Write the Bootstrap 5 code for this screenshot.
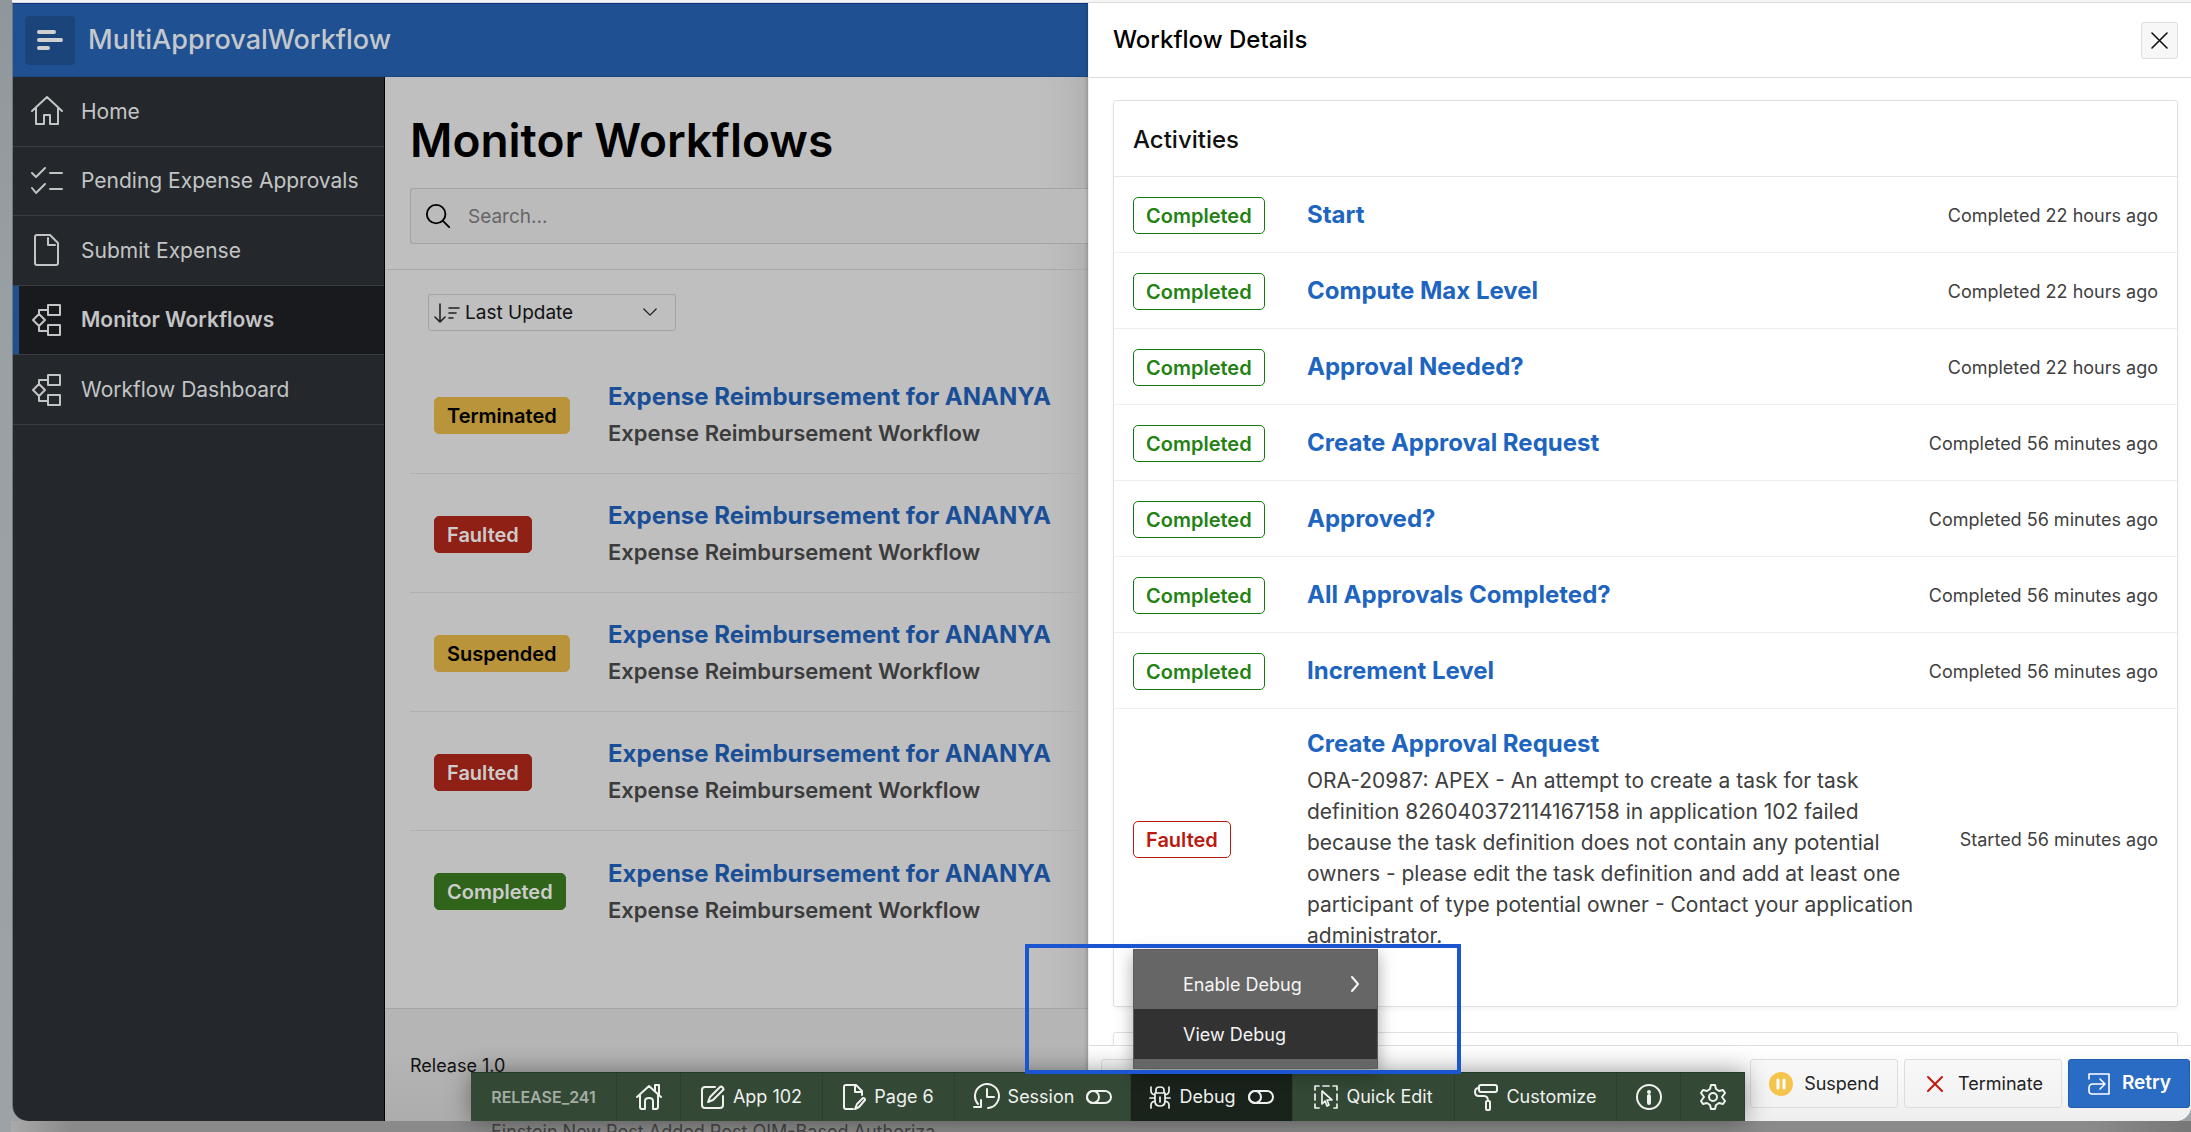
<!DOCTYPE html>
<html lang="en">
<head>
<meta charset="utf-8">
<meta name="viewport" content="width=device-width, initial-scale=1">
<title>Monitor Workflows</title>
<link rel="stylesheet" href="https://cdn.jsdelivr.net/npm/bootstrap@5.3.0/dist/css/bootstrap.min.css">
<style>
  body { font-family: Inter, "Liberation Sans", sans-serif; background: #8a8a8a; color: #000; }
  a { text-decoration: none; }
  svg { fill: none; stroke: currentColor; stroke-width: 2; stroke-linecap: round; stroke-linejoin: round; flex: none; }
  .desk { padding: 2px 0 0 12px; background: linear-gradient(#8f979d, #9aa1a5 30%, #9ca2a5); }
  .app-window { position: relative; border-top: 1px solid #d8dadd; border-left: 1px solid #6f777e; border-radius: 0 0 16px 16px; background: #bfbfbf; min-height: 0; box-shadow: 0 -2px #f4f5f6; }
  .clip-box { border-radius: 0 0 15px 15px; min-height: 0; overflow: hidden; }
  .left-side { min-width: 0; }
  .under-window { margin-left: -1px; color: #444; height: 11px; padding-left: 480px; font-size: 18px; line-height: 22px; background: linear-gradient(90deg, #aaa, #8a8a8a 60px, #8a8a8a 2080px, #777); overflow: hidden; }
  .app-header { height: 74px; background: #1f5091; border-top: 1px solid #12307f; border-bottom: 1px solid #184784; color: #c4c7cc; padding: 0 12px; gap: 13px; font-size: 27px; font-weight: 500; }
  .menu-btn { width: 50px; height: 49px; border: 0; border-radius: 4px; background: #1b447b; color: #d0d0d0; }
  .side-nav { width: 372px; background: #24282c; border-right: 1px solid #000; }
  .side-list { height: 348px; }
  .side-link { flex: 1 1 0; min-height: 0; color: #c3c4c5; font-size: 21px; gap: 18px; padding-left: 18px; border-bottom: 1px solid #3a3e42; }
  .side-link.active { background: #191a1d; font-weight: 600; box-shadow: inset 6px 0 #1f5091; }
  .page-title { font-size: 46px; line-height: 60px; font-weight: 600; margin: 0; }
  .page-head { padding: 33px 0 25px 25px; border-bottom: 1px solid #a9a9a9; gap: 18px; }
  .search-box { height: 56px; border: 1px solid #a3a3a3; border-right: 0; border-radius: 3px 0 0 3px; background: #bbb; padding-left: 14px; gap: 17px; }
  .search-box input { border: 0; background: none; outline: 0; font-size: 19px; color: #222; padding: 2px 0 0; }
  .search-box input::placeholder { color: #666; opacity: 1; }
  .sort-box { width: 248px; height: 37px; margin: 24px 0 24px 43px; border: 1px solid #a3a3a3; border-radius: 3px; padding: 0 18px 0 4px; gap: 4px; color: #222; }
  .sort-box select { appearance: none; border: 0; background: none; font-size: 19px; padding: 2px 0 0; min-width: 0; color: #111; }
  .flow-row { height: 119px; margin-left: 25px; padding: 2px 0 0 24px; border-bottom: 1px solid #b0b0b0; }
  .flow-row:last-child { border: 0; }
  .flow-status { width: 174px; }
  .flow-name { font-size: 24px; line-height: 36px; font-weight: 700; color: #1a4f97; }
  .flow-kind { font-size: 22px; line-height: 36px; font-weight: 600; color: #3c3c3c; }
  .tag { display: inline-block; height: 37px; line-height: 36px; padding: 0 12px; border: 1px solid; border-radius: 5px; font-size: 20px; font-weight: 600; }
  .tag-warn { background: #b9943b; border-color: #b9943b; color: #000; }
  .tag-fault { background: #8e2015; border-color: #8e2015; color: #ccc; }
  .tag-done { background: #30641a; border-color: #30641a; color: #ccc; }
  .tag-line-done { color: #248213; border-color: #147814; }
  .tag-line-fault { color: #ba1a10; border-color: #ba1a10; }
  .page-foot { height: 113px; border-top: 1px solid #a5a5a5; background: linear-gradient(#b5b5b5 40px, #acacac); padding: 43px 0 0 25px; font-size: 18px; line-height: 28px; color: #111; }
  .shade { box-shadow: inset -50px 0 50px -50px rgba(0,0,0,.16); }
  .drawer { width: 1103px; background: #fff; border-left: 1px solid #eee; box-shadow: 0 0 4px rgba(0,0,0,.3); position: relative; }
  .drawer-head { height: 75px; padding: 0 13px 0 24px; border-bottom: 1px solid #dcdcdc; font-size: 24px; font-weight: 500; }
  .close-btn { width: 37px; height: 37px; padding: 0; border: 1px solid #dedede; border-radius: 3px; background: #f7f7f7; color: #111; }
  .drawer-body { padding: 22px 13px 0 24px; gap: 25px; min-height: 0; overflow: hidden; }
  .panel { flex: none; border: 1px solid #e0e0e0; border-radius: 3px; background: #fff; box-shadow: 0 2px 4px rgba(0,0,0,.05); }
  .panel-title { height: 76px; line-height: 77px; padding-left: 19px; font-size: 24px; font-weight: 500; color: #111; margin: 0; border-bottom: 1px solid #e6e6e6; }
  .panel-next { height: 60px; }
  .act-row { min-height: 76px; padding: 1px 19px 0; border-bottom: 1px solid #eee; gap: 16px; }
  .act-row.failed { padding-top: 18px; padding-bottom: 18px; border: 0; margin-bottom: 37px; }
  .act-status { width: 158px; }
  .act-name { font-size: 24px; line-height: 34px; font-weight: 700; color: #1d65c0; }
  .act-text { margin-top: 4px; font-size: 21px; line-height: 31px; color: #404040; }
  .act-when { font-size: 18px; color: #404040; white-space: nowrap; }
  .drawer-foot { height: 76px; padding: 0 1px 0 12px; border-top: 1px solid #dedede; background: linear-gradient(#fff, #eee); gap: 6px; }
  .foot-btn { height: 49px; border: 1px solid #ddd; border-radius: 3px; background: linear-gradient(#f8f8f8, #f2f2f2); font-size: 18px; color: #222; padding: 0 18px; gap: 11px; }
  .foot-btn.primary { background: #2a6bc4; border-color: #1f5cb2; color: #fff; font-size: 19px; font-weight: 600; }
  .dev-bar { position: absolute; left: 458px; bottom: 0; height: 49px; background: #334835; box-shadow: 0 0 24px rgba(0,0,0,.4); border-top: 1px solid #1e3d24; font-size: 18px; }
  .dev-bar button, .dev-bar .ws { flex: none; border: 0; border-right: 1px solid #2c402e; background: none; color: #f0f2f0; gap: 8px; padding: 0 0 1px; }
  .dev-bar .ws { width: 146px; font-size: 16px; font-weight: 600; color: #a3ada4; }
  .dev-bar .w-icon { width: 64px; }
  .dev-bar .w-mid { width: 142px; }
  .dev-bar .w-page { width: 132px; }
  .dev-bar .w-ses { width: 176px; }
  .dev-bar .w-big { width: 162px; }
  .dev-bar .on { background: #19221b; }
  .debug-menu { position: absolute; left: 1120px; bottom: 52px; width: 245px; height: 120px; background: #666; box-shadow: 0 5px 16px rgba(0,0,0,.35); font-size: 18px; border: 1px solid #5c5c5c; padding: 9px 0; }
  .debug-menu button { height: 50px; border: 0; background: none; color: #f5f5f5; padding: 0 17px 0 49px; }
  .debug-menu .hot { background: #323232; }
  .callout { position: absolute; left: 1012px; bottom: 47px; width: 436px; height: 130px; border: 4px solid #1b55cf; pointer-events: none; }
</style>
</head>
<body class="vh-100 overflow-hidden">
<svg width="0" height="0" class="position-absolute" aria-hidden="true">
  <symbol id="i-flow" viewBox="0 0 30 34"><rect x="16" y="2" width="12" height="10"/><rect x="16" y="22" width="12" height="10"/><path d="M1 17l6-6 6 6-6 6zM7 11V7h9M7 23v5h9"/></symbol>
  <symbol id="i-toggle" viewBox="0 0 26 14"><rect x="1" y="1" width="24" height="12" rx="6"/><circle cx="7" cy="7" r="6"/></symbol>
</svg>
<div class="desk d-flex flex-column vh-100">
  <div class="app-window d-flex flex-column flex-fill">
    <div class="clip-box d-flex flex-fill">
      <div class="left-side d-flex flex-column flex-fill">
        <header class="app-header d-flex align-items-center">
          <button class="menu-btn d-flex align-items-center justify-content-center p-0" aria-label="Menu"><svg width="28" height="24" viewBox="0 0 28 24" style="stroke-width:4"><path d="M3 4h15M3 12h22M3 20h9"/></svg></button>
          <div>MultiApprovalWorkflow</div>
        </header>
        <div class="d-flex flex-fill">
          <nav class="side-nav flex-shrink-0">
            <div class="side-list d-flex flex-column">
              <a href="#" class="side-link d-flex align-items-center"><svg width="32" height="32" viewBox="0 0 32 32"><path d="M1 16L16 2l15 14M5 13v16h8v-9h6v9h8V13"/></svg>Home</a>
              <a href="#" class="side-link d-flex align-items-center"><svg width="32" height="32" viewBox="0 0 32 32"><path d="M1 8l4 4 9-9M1 23l4 5 9-9M19 8h12M19 24h12"/></svg>Pending Expense Approvals</a>
              <a href="#" class="side-link d-flex align-items-center"><svg width="32" height="34" viewBox="0 0 32 34"><path d="M6 2h13l8 8v20q0 2-2 2H6q-2 0-2-2V4q0-2 2-2zM17 5v7h7"/></svg>Submit Expense</a>
              <a href="#" class="side-link active d-flex align-items-center" aria-current="page"><svg width="32" height="34"><use href="#i-flow"/></svg>Monitor Workflows</a>
              <a href="#" class="side-link d-flex align-items-center"><svg width="32" height="34"><use href="#i-flow"/></svg>Workflow Dashboard</a>
            </div>
          </nav>
          <main class="d-flex flex-column flex-fill shade">
            <div class="page-head d-flex flex-column">
              <h1 class="page-title">Monitor Workflows</h1>
              <label class="search-box d-flex align-items-center"><svg width="26" height="26" viewBox="0 0 28 28"><circle cx="12" cy="12" r="10"/><path d="M19 19l7 7"/></svg><input type="search" class="flex-fill" placeholder="Search..." aria-label="Search"></label>
            </div>
            <label class="sort-box d-flex align-items-center flex-shrink-0"><svg width="28" height="20" viewBox="0 0 28 20"><path d="M7 1v18M2 14l5 5 5-5M16 5h10M16 10h7M16 15h4" style="stroke-width:1.6"/></svg><select class="flex-fill" aria-label="Sort by"><option>Last Update</option></select><svg width="14" height="9" viewBox="0 0 16 10" style="stroke-width:1.5"><path d="M1 1l7 7 7-7"/></svg></label>
            <div class="flex-fill">
              <div class="flow-row d-flex align-items-center"><div class="flow-status"><span class="tag tag-warn">Terminated</span></div><div><a href="#" class="flow-name d-block">Expense Reimbursement for ANANYA</a><div class="flow-kind">Expense Reimbursement Workflow</div></div></div>
              <div class="flow-row d-flex align-items-center"><div class="flow-status"><span class="tag tag-fault">Faulted</span></div><div><a href="#" class="flow-name d-block">Expense Reimbursement for ANANYA</a><div class="flow-kind">Expense Reimbursement Workflow</div></div></div>
              <div class="flow-row d-flex align-items-center"><div class="flow-status"><span class="tag tag-warn">Suspended</span></div><div><a href="#" class="flow-name d-block">Expense Reimbursement for ANANYA</a><div class="flow-kind">Expense Reimbursement Workflow</div></div></div>
              <div class="flow-row d-flex align-items-center"><div class="flow-status"><span class="tag tag-fault">Faulted</span></div><div><a href="#" class="flow-name d-block">Expense Reimbursement for ANANYA</a><div class="flow-kind">Expense Reimbursement Workflow</div></div></div>
              <div class="flow-row d-flex align-items-center"><div class="flow-status"><span class="tag tag-done">Completed</span></div><div><a href="#" class="flow-name d-block">Expense Reimbursement for ANANYA</a><div class="flow-kind">Expense Reimbursement Workflow</div></div></div>
            </div>
            <footer class="page-foot">Release 1.0</footer>
          </main>
        </div>
      </div>
      <aside class="drawer d-flex flex-column flex-shrink-0" aria-label="Workflow Details">
        <div class="drawer-head d-flex align-items-center justify-content-between flex-shrink-0">
          <div>Workflow Details</div>
          <button class="close-btn d-flex align-items-center justify-content-center" aria-label="Close"><svg width="17" height="17" viewBox="0 0 17 17" style="stroke-width:1.6"><path d="M1 1l15 15M16 1L1 16"/></svg></button>
        </div>
        <div class="drawer-body d-flex flex-column flex-fill">
          <section class="panel">
            <h2 class="panel-title">Activities</h2>
            <div class="act-row d-flex align-items-center"><div class="act-status"><span class="tag tag-line-done">Completed</span></div><a href="#" class="act-name flex-fill">Start</a><div class="act-when">Completed 22 hours ago</div></div>
            <div class="act-row d-flex align-items-center"><div class="act-status"><span class="tag tag-line-done">Completed</span></div><a href="#" class="act-name flex-fill">Compute Max Level</a><div class="act-when">Completed 22 hours ago</div></div>
            <div class="act-row d-flex align-items-center"><div class="act-status"><span class="tag tag-line-done">Completed</span></div><a href="#" class="act-name flex-fill">Approval Needed?</a><div class="act-when">Completed 22 hours ago</div></div>
            <div class="act-row d-flex align-items-center"><div class="act-status"><span class="tag tag-line-done">Completed</span></div><a href="#" class="act-name flex-fill">Create Approval Request</a><div class="act-when">Completed 56 minutes ago</div></div>
            <div class="act-row d-flex align-items-center"><div class="act-status"><span class="tag tag-line-done">Completed</span></div><a href="#" class="act-name flex-fill">Approved?</a><div class="act-when">Completed 56 minutes ago</div></div>
            <div class="act-row d-flex align-items-center"><div class="act-status"><span class="tag tag-line-done">Completed</span></div><a href="#" class="act-name flex-fill">All Approvals Completed?</a><div class="act-when">Completed 56 minutes ago</div></div>
            <div class="act-row d-flex align-items-center"><div class="act-status"><span class="tag tag-line-done">Completed</span></div><a href="#" class="act-name flex-fill">Increment Level</a><div class="act-when">Completed 56 minutes ago</div></div>
            <div class="act-row failed d-flex align-items-center"><div class="act-status flex-shrink-0"><span class="tag tag-line-fault">Faulted</span></div><div class="flex-fill"><a href="#" class="act-name d-block">Create Approval Request</a><div class="act-text">ORA-20987: APEX - An attempt to create a task for task definition 826040372114167158 in application 102 failed because the task definition does not contain any potential owners - please edit the task definition and add at least one participant of type potential owner - Contact your application administrator.</div></div><div class="act-when">Started 56 minutes ago</div></div>
          </section>
          <section class="panel panel-next"></section>
        </div>
        <div class="drawer-foot d-flex align-items-center flex-shrink-0">
          <button class="foot-btn me-auto" aria-label="Cancel"><svg width="20" height="16" viewBox="0 0 20 16"></svg></button>
          <button class="foot-btn d-flex align-items-center"><svg width="24" height="24" viewBox="0 0 24 24"><circle cx="12" cy="12" r="12" fill="#f5c44c" stroke="none"/><path d="M9 8v8M15 8v8" stroke="#fff" style="stroke-width:3"/></svg>Suspend</button>
          <button class="foot-btn d-flex align-items-center"><svg width="24" height="24" viewBox="0 0 24 24"><path d="M5 5l14 14M19 5L5 19" stroke="#c0190f"/></svg>Terminate</button>
          <button class="foot-btn primary d-flex align-items-center"><svg width="24" height="24" viewBox="0 0 24 24" style="stroke-width:1.6"><path d="M2 7V2h20v20H5q-3 0-3-3v-3q0-4 4-4h11M13 7l5 5-5 5"/></svg>Retry</button>
        </div>
      </aside>
    </div>
    <div class="dev-bar d-flex" role="toolbar">
      <div class="ws d-flex align-items-center justify-content-center">RELEASE_241</div>
      <button class="w-icon d-flex align-items-center justify-content-center" aria-label="Home"><svg width="26" height="28" viewBox="0 0 26 28"><path d="M1 14L13 3l12 11M4 12v12q0 2 2 2h3v-8q0-3 4-3t4 3v8h3q2 0 2-2V12M19 8V2h4v10"/></svg></button>
      <button class="w-mid d-flex align-items-center justify-content-center"><svg width="24" height="24" viewBox="0 0 24 24"><path d="M14 2H4Q1 2 1 5v15q0 3 3 3h15q3 0 3-3v-9M7 17l2-5 10-10q2-1 3 1t0 2L12 15z"/></svg>App 102</button>
      <button class="w-page d-flex align-items-center justify-content-center"><svg width="23" height="28" viewBox="0 0 23 28"><path d="M10 26H3q-2 0-2-2V4q0-2 2-2h10l6 6v4M12 3v6h6M12 26l2-5 6-6q2 0 2 2l-6 7z"/></svg>Page 6</button>
      <button class="w-ses d-flex align-items-center justify-content-center"><svg width="27" height="27" viewBox="0 0 27 27"><path d="M5 21A12 12 0 1 1 15 25M14 6v8h7M1 24h7v-7"/></svg>Session<svg class="ms-1" width="26" height="14"><use href="#i-toggle"/></svg></button>
      <button class="w-big on d-flex align-items-center justify-content-center"><svg width="22" height="24" viewBox="0 0 22 24" style="stroke-width:1.7"><path d="M6 8h10v8q0 5-5 5t-5-5zM7 8V5q0-3 4-3t4 3v3M1 13h5M16 13h5M2 2v4q0 3 4 4M20 2v4q0 3-4 4M2 23v-3q0-3 4-4M20 23v-3q0-3-4-4M11 12v5"/></svg>Debug<svg class="ms-1" width="26" height="14"><use href="#i-toggle"/></svg></button>
      <button class="w-big d-flex align-items-center justify-content-center"><svg width="24" height="24" viewBox="0 0 24 24" style="stroke-width:1.7"><path d="M1 5V1h4M9 1h6M19 1h4v4M23 9v6M23 19v4h-3M5 23H1v-4M1 15V9M8 6l10 9h-5l2 5-2 1-2-5-3 3z"/></svg>Quick Edit</button>
      <button class="w-big d-flex align-items-center justify-content-center"><svg width="24" height="28" viewBox="0 0 24 28"><rect x="5" y="2" width="18" height="7" rx="2"/><path d="M5 5Q1 5 1 9t4 4h5q4 0 4 5"/><rect x="12" y="18" width="4" height="9" rx="1"/></svg>Customize</button>
      <button class="w-icon d-flex align-items-center justify-content-center" aria-label="Info"><svg width="26" height="26" viewBox="0 0 26 26"><circle cx="13" cy="13" r="12"/><path d="M13 12v7M13 8v0" style="stroke-width:4"/></svg></button>
      <button class="w-icon d-flex align-items-center justify-content-center" aria-label="Settings"><svg width="26" height="26" viewBox="0 0 26 26"><circle cx="13" cy="13" r="4"/><path d="M11 1h4l1 4 3 2 4-1 2 3-3 4 3 4-2 3-4-1-3 2-1 4h-4l-1-4-3-2-4 1-2-3 3-4-3-4 2-3 4 1 3-2z"/></svg></button>
    </div>
    <div class="debug-menu d-flex flex-column">
      <button class="d-flex align-items-center justify-content-between">Enable Debug<svg width="10" height="16" viewBox="0 0 10 16"><path d="M2 1l6 7-6 7"/></svg></button>
      <button class="hot d-flex align-items-center">View Debug</button>
    </div>
    <div class="callout"></div>
  </div>
  <div class="under-window text-nowrap flex-shrink-0">Einstein New Post Added Post OIM-Based Authoriza</div>
</div>
<script src="https://cdn.jsdelivr.net/npm/bootstrap@5.3.0/dist/js/bootstrap.bundle.min.js"></script>
</body>
</html>
